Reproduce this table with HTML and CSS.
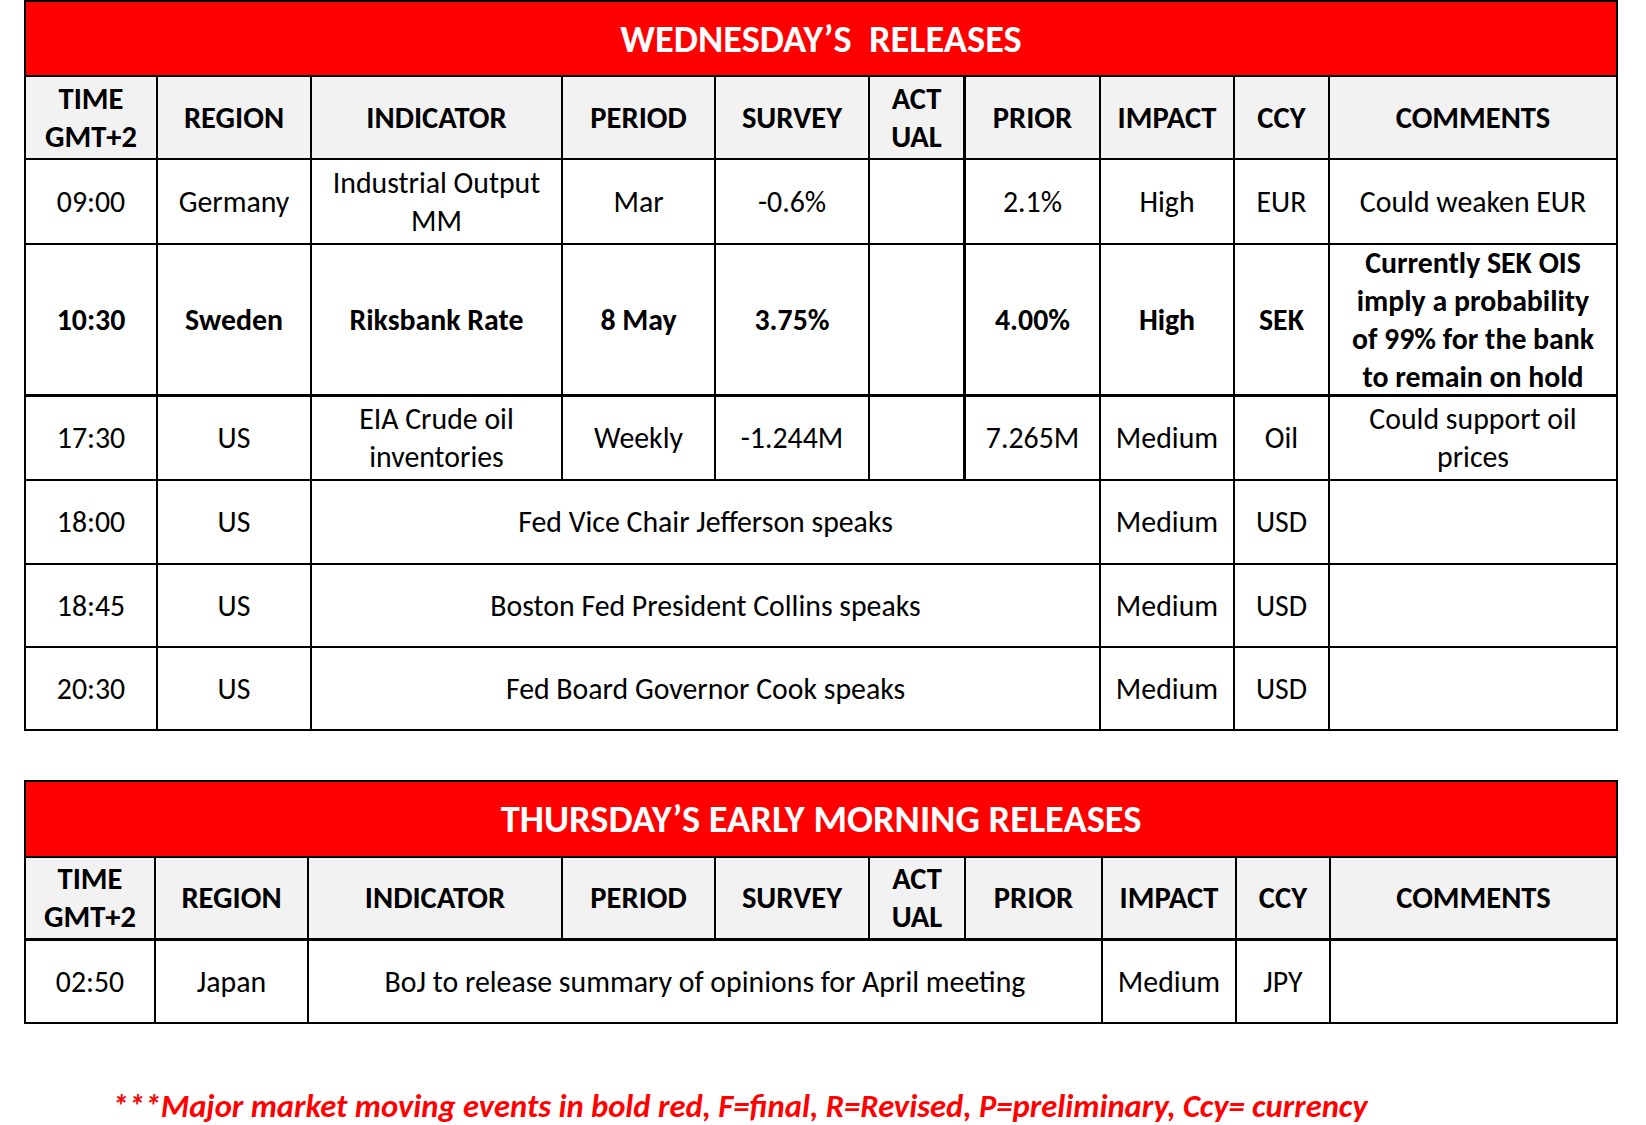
FILE: index.html
```html
<!DOCTYPE html>
<html lang="en">
<head>
<meta charset="utf-8">
<title>Releases</title>
<link rel="stylesheet" href="styles.css">
</head>
<body>
<div class="page">
  <div class="tbl tbl-wed">
    <div class="cell title">WEDNESDAY’S&nbsp; RELEASES</div>

    <div class="cell head">TIME<br>GMT+2</div>
    <div class="cell head">REGION</div>
    <div class="cell head">INDICATOR</div>
    <div class="cell head">PERIOD</div>
    <div class="cell head">SURVEY</div>
    <div class="cell head act">ACT<br>UAL</div>
    <div class="cell head">PRIOR</div>
    <div class="cell head">IMPACT</div>
    <div class="cell head">CCY</div>
    <div class="cell head">COMMENTS</div>

    <div class="cell">09:00</div>
    <div class="cell">Germany</div>
    <div class="cell">Industrial Output<br>MM</div>
    <div class="cell">Mar</div>
    <div class="cell">-0.6%</div>
    <div class="cell act"></div>
    <div class="cell">2.1%</div>
    <div class="cell">High</div>
    <div class="cell">EUR</div>
    <div class="cell">Could weaken EUR</div>

    <div class="cell bold thick">10:30</div>
    <div class="cell bold thick">Sweden</div>
    <div class="cell bold thick">Riksbank Rate</div>
    <div class="cell bold thick">8 May</div>
    <div class="cell bold thick">3.75%</div>
    <div class="cell bold thick act"></div>
    <div class="cell bold thick">4.00%</div>
    <div class="cell bold thick">High</div>
    <div class="cell bold thick">SEK</div>
    <div class="cell bold thick">Currently SEK OIS<br>imply a probability<br>of 99% for the bank<br>to remain on hold</div>

    <div class="cell">17:30</div>
    <div class="cell">US</div>
    <div class="cell">EIA Crude oil<br>inventories</div>
    <div class="cell">Weekly</div>
    <div class="cell">-1.244M</div>
    <div class="cell act"></div>
    <div class="cell">7.265M</div>
    <div class="cell">Medium</div>
    <div class="cell">Oil</div>
    <div class="cell">Could support oil<br>prices</div>

    <div class="cell">18:00</div>
    <div class="cell">US</div>
    <div class="cell span5">Fed Vice Chair Jefferson speaks</div>
    <div class="cell">Medium</div>
    <div class="cell">USD</div>
    <div class="cell"></div>

    <div class="cell">18:45</div>
    <div class="cell">US</div>
    <div class="cell span5">Boston Fed President Collins speaks</div>
    <div class="cell">Medium</div>
    <div class="cell">USD</div>
    <div class="cell"></div>

    <div class="cell">20:30</div>
    <div class="cell">US</div>
    <div class="cell span5">Fed Board Governor Cook speaks</div>
    <div class="cell">Medium</div>
    <div class="cell">USD</div>
    <div class="cell"></div>
  </div>

  <div class="tbl tbl-thu">
    <div class="cell title">THURSDAY’S EARLY MORNING RELEASES</div>

    <div class="cell head">TIME<br>GMT+2</div>
    <div class="cell head">REGION</div>
    <div class="cell head">INDICATOR</div>
    <div class="cell head">PERIOD</div>
    <div class="cell head">SURVEY</div>
    <div class="cell head">ACT<br>UAL</div>
    <div class="cell head">PRIOR</div>
    <div class="cell head">IMPACT</div>
    <div class="cell head">CCY</div>
    <div class="cell head">COMMENTS</div>

    <div class="cell">02:50</div>
    <div class="cell">Japan</div>
    <div class="cell span5">BoJ to release summary of opinions for April meeting</div>
    <div class="cell">Medium</div>
    <div class="cell">JPY</div>
    <div class="cell"></div>
  </div>

  <p class="note">***Major market moving events in bold red, F=final, R=Revised, P=preliminary, Ccy= currency</p>
</div>
</body>
</html>
```

FILE: styles.css
```css
html, body {
  margin: 0;
  padding: 0;
  background: #ffffff;
}

body {
  font-family: "Carlito", "Lato", sans-serif;
  color: #000000;
}

.page {
  padding-left: 24px;
  width: 1594px;
}

.tbl {
  display: grid;
  border-left: 2px solid #000;
  border-top: 2px solid #000;
  font-size: 29.8px;
  line-height: 38px;
}

.tbl-wed {
  grid-template-columns: 132px 154px 251px 153px 154px 96px 135px 134px 95px 288px;
  grid-template-rows: 75px 83px 85px 152px 84px 84px 83px 83px;
}

.tbl-thu {
  margin-top: 49px;
  grid-template-columns: 130px 153px 254px 153px 154px 96px 137px 134px 94px 287px;
  grid-template-rows: 76px 83px 83px;
}

.cell {
  box-sizing: border-box;
  border-right: 2px solid #000;
  border-bottom: 2px solid #000;
  display: flex;
  align-items: center;
  justify-content: center;
  text-align: center;
  white-space: nowrap;
  overflow: hidden;
}

.title {
  grid-column: 1 / -1;
  background: #ff0000;
  color: #ffffff;
  font-weight: 700;
  font-size: 38.4px;
}

.head {
  background: #f2f2f2;
  font-weight: 700;
  font-size: 30.6px;
}

.tbl-thu .head {
  border-bottom-width: 3px;
}

.act {
  border-right-width: 3px;
}

.thick {
  border-bottom-width: 3px;
}

.bold {
  font-weight: 700;
}

.span5 {
  grid-column: span 5;
}

.note {
  margin: 63px 0 0 88px;
  color: #ff0000;
  font-weight: 700;
  font-style: italic;
  font-size: 32.6px;
  line-height: 38px;
  white-space: nowrap;
}
```
